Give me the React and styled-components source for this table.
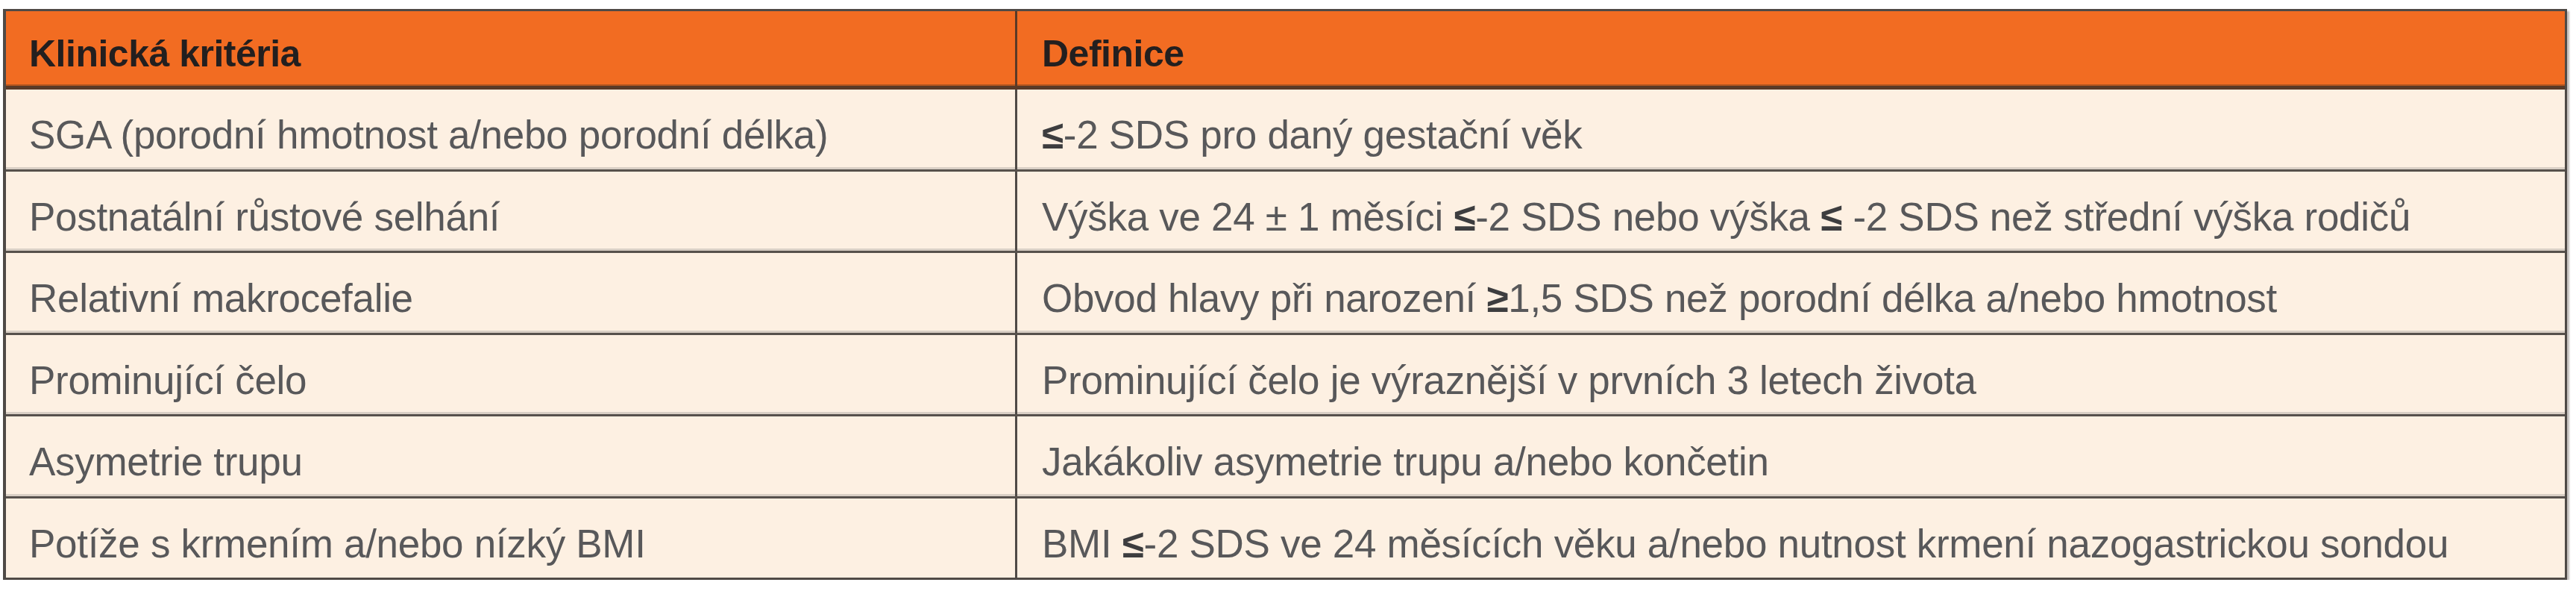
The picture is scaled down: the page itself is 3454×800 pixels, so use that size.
import React from "react";
import styled, { createGlobalStyle } from "styled-components";

const Global = createGlobalStyle`
  html, body { margin: 0; padding: 0; background: #ffffff; }
  body { font-family: "Liberation Sans", Arial, sans-serif; }
`;

const Page = styled.div`
  padding: 12px 0 0 4px;
`;

const Table = styled.div`
  width: 3438px;
  box-sizing: border-box;
  border: 3px solid #4f4a46;
  border-left-width: 4px;
  background: #fdf0e2;
  box-shadow: 3px 3px 2px rgba(80, 70, 60, 0.35);
  display: flex;
  flex-direction: column;
`;

const Row = styled.div`
  display: grid;
  grid-template-columns: 1356px 1fr;
  box-sizing: border-box;
  height: ${(p) => p.$h}px;
  background: ${(p) => (p.$head ? "#f26c22" : "#fdf0e2")};
  border-bottom: ${(p) =>
    p.$last ? "none" : p.$head ? "5px solid #5a3a27" : "3px solid #57514c"};
  box-shadow: ${(p) =>
    p.$last ? "none" : p.$head ? "inset 0 -2px 0 #b4561f" : "inset 0 -3px 0 #d9cfc5"};
`;

const Cell = styled.div`
  display: flex;
  align-items: center;
  box-sizing: border-box;
  padding: 14px 0 0 ${(p) => (p.$second ? 33 : 31)}px;
  border-right: ${(p) =>
    p.$second ? "none" : p.$head ? "3px solid #5a3a27" : "3px solid #4f4a46"};
  font-family: "Liberation Sans", Arial, sans-serif;
  font-size: ${(p) => (p.$head ? 50 : 53)}px;
  font-weight: ${(p) => (p.$head ? 700 : 400)};
  letter-spacing: ${(p) => (p.$head ? "-0.5px" : "-0.3px")};
  color: ${(p) => (p.$head ? "#231f1f" : "#58585a")};
  white-space: nowrap;
`;

const Text = styled.span`
  display: block;
`;

const Sym = styled.span`
  font-weight: 700;
  color: #3d3d3f;
`;

const rows = [
  ["SGA (porodní hmotnost a/nebo porodní délka)", <><Sym>≤</Sym>-2 SDS pro daný gestační věk</>],
  ["Postnatální růstové selhání", <>Výška ve 24 ± 1 měsíci <Sym>≤</Sym>-2 SDS nebo výška <Sym>≤</Sym> -2 SDS než střední výška rodičů</>],
  ["Relativní makrocefalie", <>Obvod hlavy při narození <Sym>≥</Sym>1,5 SDS než porodní délka a/nebo hmotnost</>],
  ["Prominující čelo", "Prominující čelo je výraznější v prvních 3 letech života"],
  ["Asymetrie trupu", "Jakákoliv asymetrie trupu a/nebo končetin"],
  ["Potíže s krmením a/nebo nízký BMI", <>BMI <Sym>≤</Sym>-2 SDS ve 24 měsících věku a/nebo nutnost krmení nazogastrickou sondou</>],
];

const heights = [110, 109, 110, 109, 110, 106];

export default function App() {
  return (
    <>
      <Global />
      <Page>
        <Table>
          <Row $head $h={105}>
            <Cell $head><Text>Klinická kritéria</Text></Cell>
            <Cell $head $second><Text>Definice</Text></Cell>
          </Row>
          {rows.map((r, i) => (
            <Row key={i} $h={heights[i]} $last={i === rows.length - 1}>
              <Cell><Text>{r[0]}</Text></Cell>
              <Cell $second><Text>{r[1]}</Text></Cell>
            </Row>
          ))}
        </Table>
      </Page>
    </>
  );
}
